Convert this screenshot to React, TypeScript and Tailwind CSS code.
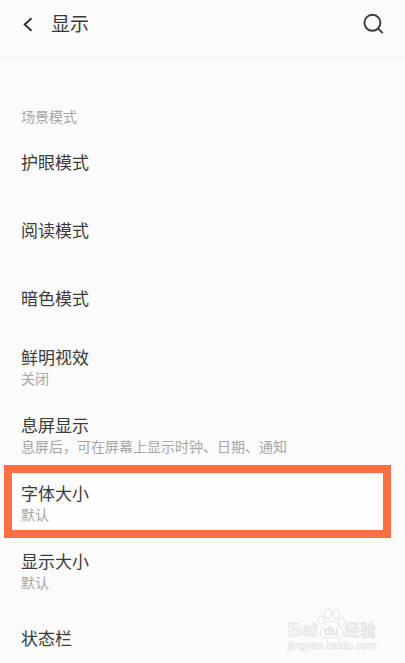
import React from 'react';

interface SettingItem {
  title: string;
  value?: string;
  highlighted?: boolean;
}

const items: SettingItem[] = [
  { title: '护眼模式' },
  { title: '阅读模式' },
  { title: '暗色模式' },
  { title: '鲜明视效', value: '关闭' },
  { title: '息屏显示', value: '息屏后，可在屏幕上显示时钟、日期、通知' },
  { title: '字体大小', value: '默认', highlighted: true },
  { title: '显示大小', value: '默认' },
  { title: '状态栏' },
];

const Header: React.FC = () => {
  return (
    <header className="flex h-[59px] shrink-0 items-center border-b-2 border-[#f4f4f4] px-5 pb-2">
      <button type="button" aria-label="返回" className="flex h-8 w-4 items-center justify-center">
        <svg width="16" height="16" viewBox="0 0 16 16" fill="none" stroke="#2e2e2e" strokeWidth="1.9">
          <path d="M11.500 1.200 4.700 7.500l6.800 6.300" />
        </svg>
      </button>
      <h1 className="ml-[15px] text-[19px] leading-7 text-[#3a3a3a]">显示</h1>
      <button type="button" aria-label="搜索" className="ml-auto flex h-8 w-6 items-center justify-center">
        <svg width="24" height="24" viewBox="0 0 24 24" fill="none" stroke="#3a3a3a" strokeWidth="1.9">
          <circle cx="11.4" cy="9.8" r="8" />
          <path d="m16.800 15.300 5 4.800" />
        </svg>
      </button>
    </header>
  );
};

const SettingRow: React.FC<SettingItem> = ({ title, value, highlighted }) => {
  return (
    <li className="relative">
      {highlighted && (
        <div className="absolute -top-[5px] right-[14px] bottom-0 left-1 border-8 border-[#fc6e43] bg-[#fdfdfd]" />
      )}
      <button type="button" className="relative flex h-[68px] w-full flex-col justify-center px-[21px] text-left">
        <span className="text-[17px] leading-[22px] text-[#3a3a3a]">{title}</span>
        {value && <span className="text-[14px] leading-[18px] text-[#a6a6a6]">{value}</span>}
      </button>
    </li>
  );
};

const Watermark: React.FC = () => {
  return (
    <svg
      className="pointer-events-none absolute right-6 bottom-2"
      width="94"
      height="48"
      viewBox="0 0 94 48"
      fill="#ffffff"
      stroke="#e3e3e3"
      strokeWidth="1"
    >
      <text x="1" y="29" fontSize="19" fontWeight="700">Bai</text>
      <ellipse cx="34.500" cy="13" rx="3" ry="4" transform="rotate(-12 34.500 13)" />
      <ellipse cx="41" cy="6.500" rx="3.300" ry="4.800" />
      <ellipse cx="49.200" cy="7" rx="3.200" ry="4.800" transform="rotate(10 49.200 7)" />
      <ellipse cx="54.500" cy="15" rx="3" ry="4" transform="rotate(15 54.500 15)" />
      <path d="M44.500 14c-3 0-4.500 2.300-6 4.200-2 2.500-5.300 4-5.300 7.500 0 3.300 2.600 4.800 5.400 4.800 2.200 0 3.700-.4 5.900-.4s3.800.4 6.200.4c3.200 0 5.300-1.700 5.300-4.800 0-3.300-3-4.900-5-7.400C49.300 16.100 47.700 14 44.500 14Z" />
      <text x="37" y="28" fontSize="12" fontWeight="700" strokeWidth="0.300" fill="#e3e3e3">du</text>
      <text x="57" y="29" fontSize="16" strokeWidth="0.800">经验</text>
      <text x="1" y="42" fontSize="11" strokeWidth="0.600">jingyan.baidu.com</text>
    </svg>
  );
};

const App: React.FC = () => {
  return (
    <div
      lang="zh-CN"
      className="relative flex h-screen flex-col overflow-hidden bg-[#fbfbfb] font-['Liberation_Sans','Noto_Sans_CJK_SC',sans-serif]"
    >
      <Header />
      <main className="min-h-0 flex-1 overflow-y-auto pt-[49px] [scrollbar-width:none]">
        <h2 className="mb-1 px-[21px] text-[14px] leading-[18px] text-[#a6a6a6]">场景模式</h2>
        <ul>
          {items.map((item) => (
            <SettingRow key={item.title} {...item} />
          ))}
        </ul>
      </main>
      <Watermark />
    </div>
  );
};

export default App;
